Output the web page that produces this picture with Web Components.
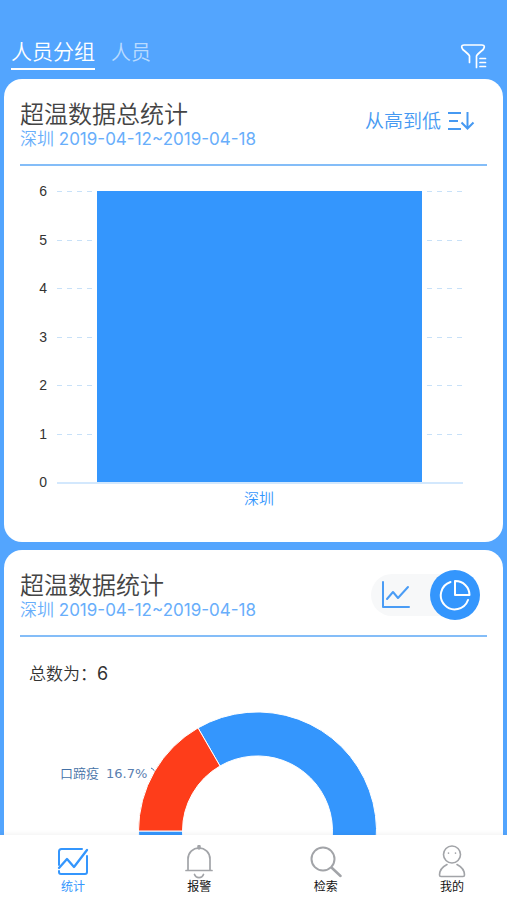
<!DOCTYPE html>
<html lang="zh-CN">
<head>
<meta charset="utf-8">
<meta name="viewport" content="width=device-width, initial-scale=1">
<title>超温数据统计</title>
<style>
  body { margin: 0; background: #53a5fe; font-family: Inter, "Noto Sans CJK SC", sans-serif; color: #444; }
</style>
</head>
<body>
<stats-app>
  <app-header slot="header"></app-header>
  <stat-card heading="超温数据总统计" place="深圳" period="2019-04-12~2019-04-18">
    <sort-button slot="action">从高到低</sort-button>
    <bar-chart label="深圳" value="6"></bar-chart>
  </stat-card>
  <stat-card heading="超温数据统计" place="深圳" period="2019-04-12~2019-04-18">
    <chart-switch slot="action"></chart-switch>
    <donut-chart total="6" label="口蹄疫" share="16.7%"></donut-chart>
  </stat-card>
  <tab-bar slot="footer">
    <tab-item current>
      <svg slot="icon" width="32" height="32" viewBox="0 0 32 32" fill="none" stroke="#3496fd" stroke-width="2" stroke-linecap="round" stroke-linejoin="round"><path d="M25 3H4.500Q2 3 2 5.500V19M2 25v1q0 2 2 2h24q2 0 2-2V10" /><path d="M2 22l8-9 7 8L30 4" stroke-width="2.300"/></svg>统计
    </tab-item>
    <tab-item>
      <svg slot="icon" width="32" height="34" viewBox="0 0 32 34" fill="none" stroke="#a2a4a8" stroke-width="1.700" stroke-linecap="round"><path d="M5 25V14a11 11 0 0 1 22 0v11M3 25.500h26M11.500 29.500a4.800 4.800 0 0 0 9 0"/><path d="M16 1.500v1.500" stroke-width="3.500"/></svg>报警
    </tab-item>
    <tab-item>
      <svg slot="icon" width="32" height="32" viewBox="0 0 32 32" fill="none" stroke="#a2a4a8" stroke-width="2" stroke-linecap="round"><circle cx="13" cy="13" r="11.500"/><path d="M22 22l8.500 8" stroke-width="2.500"/></svg>检索
    </tab-item>
    <tab-item>
      <svg slot="icon" width="32" height="34" viewBox="0 0 32 34" fill="none" stroke="#a2a4a8" stroke-width="1.600" stroke-linecap="round" stroke-linejoin="round"><circle cx="16" cy="9.500" r="8.500"/><path d="M12.500 8v.2M19.500 8v.2M11 19.500C6 22 3.500 26 3.500 30q0 1.500 1.500 1.500h22q1.500 0 1.500-1.500c0-4-2.500-8-7.500-10.500"/></svg>我的
    </tab-item>
  </tab-bar>
</stats-app>

<script>
const define = (name, render) => customElements.define(name, class extends HTMLElement {
  constructor() { super(); this.attachShadow({ mode: 'open' }); }
  connectedCallback() { this.shadowRoot.innerHTML = render(this); }
});

define('stats-app', () => `
  <style>
    :host { display: flex; flex-direction: column; height: 100vh; }
    main { flex: 1; min-height: 0; overflow: hidden; display: flex; flex-direction: column; gap: 8px; padding: 0 4px; }
    ::slotted(stat-card) { flex: none; }
  </style>
  <slot name="header"></slot>
  <main><slot></slot></main>
  <slot name="footer"></slot>`);

define('app-header', () => `
  <style>
    :host { display: flex; justify-content: space-between; align-items: flex-start; padding: 36px 20px 9px 11px; }
    nav { display: flex; gap: 16px; }
    button { border: 0; padding: 0; background: none; font: inherit; color: #fff; height: 34px; box-sizing: border-box; }
    .tab { font-size: 20px; font-weight: 350; line-height: 32px; color: #b9dbff; }
    .tab.on { font-size: 21px; color: #fff; border-bottom: 2px solid #fff; }
    svg { display: block; margin-top: 7px; }
  </style>
  <nav><button class="tab on">人员分组</button><button class="tab">人员</button></nav>
  <button aria-label="筛选">
    <svg width="27" height="27" viewBox="0 0 27 27" fill="none" stroke="#fff" stroke-width="1.700" stroke-linecap="round" stroke-linejoin="round"><path d="M9.500 19.500v-6.500Q9 11.500 2.800 6.500 0 2 4 2h18q4 0 1.200 4.500Q17 11.500 16.500 13v11.500M20 15.500h5.500M20 19.500h5.500M20 23.500h5.500"/></svg>
  </button>`);

define('stat-card', el => `
  <style>
    :host { display: block; background: #fff; border-radius: 18px; padding: 20px 16px; }
    header { display: flex; justify-content: space-between; align-items: center; height: 65px; border-bottom: 2px solid #84bdf8; }
    header > div { align-self: flex-start; }
    h2 { margin: 0; font-size: 24px; line-height: 32px; font-weight: 350; color: #444; white-space: nowrap; }
    p { margin: 0; font-size: 17px; line-height: 16px; color: #68aefb; font-weight: 350; white-space: nowrap; }
    span { font-weight: 400; }
  </style>
  <header><div><h2>${el.getAttribute('heading')}</h2><p>${el.getAttribute('place')} <span>${el.getAttribute('period')}</span></p></div><slot name="action"></slot></header>
  <slot></slot>`);

define('sort-button', () => `
  <style>
    :host { display: block; padding: 0 12px 20px 0; }
    button { display: flex; align-items: center; gap: 6px; border: 0; padding: 0; background: none; color: #4699f2; font: inherit; font-size: 19px; font-weight: 350; line-height: 24px; white-space: nowrap; }
  </style>
  <button><slot></slot><svg width="28" height="20" viewBox="0 0 28 20" fill="none" stroke="#4699f2" stroke-width="2"><path d="M1 1h13M2 9h9M1 17h13M20.500 0v16M14.500 10.500l6 6 6-6"/></svg></button>`);

define('bar-chart', el => {
  const max = Number(el.getAttribute('value')), step = 291 / max;
  const y = v => Math.round(311 - v * step) - 0.5;
  let rows = '';
  for (let v = 0; v <= max; v++) {
    rows += `<text x="27" y="${Math.round(y(v) + 5.5)}" text-anchor="end">${v}</text>`;
    if (v) rows += `<path class="grid" d="M37 ${y(v) + 1}H443"/>`;
  }
  return `
  <style>
    :host { display: block; padding-top: 5px; }
    svg { display: block; width: 100%; height: auto; }
    text { font: 14px "Liberation Sans", sans-serif; fill: #333; }
    .grid { stroke: #c8e1f8; stroke-dasharray: 5 5; }
    .name { font: 350 15px "Noto Sans CJK SC", sans-serif; fill: #3496fd; }
  </style>
  <svg viewBox="0 0 467 351" role="img">
    ${rows}
    <path d="M37 312H443" stroke="#d3e8fd" stroke-width="2"/>
    <rect x="77" y="20" width="325" height="291" fill="#3496fd"/>
    <text class="name" x="239" y="333" text-anchor="middle">${el.getAttribute('label')}</text>
  </svg>`;
});

define('chart-switch', () => `
  <style>
    :host { display: block; padding: 0 7px 16px 0; }
    div { display: flex; align-items: center; height: 42px; background: #f7f8f9; border-radius: 21px; }
    button { border: 0; padding: 0; background: none; display: grid; place-items: center; width: 50px; height: 50px; border-radius: 25px; }
    .on { background: #3496fd; margin-left: 9px; }
  </style>
  <div>
    <button aria-label="折线图"><svg width="30" height="28" viewBox="0 0 30 28" fill="none" stroke="#4a9cf5" stroke-width="2" stroke-linecap="round" stroke-linejoin="round"><path d="M2 1v25h26M6 18l6-7 5 6L27 6"/></svg></button>
    <button class="on" aria-label="饼图"><svg width="32" height="32" viewBox="0 0 32 32" fill="none" stroke="#fff" stroke-width="2" stroke-linecap="round" stroke-linejoin="round"><path d="M11.500 3A14 14 0 1 0 29 21M16 2v14h14.500A14 14 0 0 0 16 2z"/></svg></button>
  </div>`);

define('donut-chart', el => `
  <style>
    :host { display: block; }
    p { margin: 0; padding: 25px 9px 0; font-size: 17px; line-height: 24px; font-weight: 350; color: #333; }
    p span { font-size: 18px; font-weight: 400; }
    svg { display: block; width: 100%; height: auto; }
    text { font: 350 13px "Noto Sans CJK SC", sans-serif; fill: #4572a7; }
    .share { font: 13px "DejaVu Sans", sans-serif; fill: #5a80b0; }
  </style>
  <p>总数为：<span>${el.getAttribute('total')}</span></p>
  <svg viewBox="0 0 467 290" role="img">
    <text x="40" y="92">${el.getAttribute('label')}</text>
    <text class="share" x="86" y="92">${el.getAttribute('share')}</text>
    <path d="M131 82q3 1 4 4" fill="none" stroke="#4572a7"/>
    <g stroke="#fff" transform="translate(237.500 145)">
      <path fill="#3496fd" d="M-59.500-103.100A119 119 0 1 1-119 0H-75A75 75 0 1 0-37.500-65z"/>
      <path fill="#fe3d1a" d="M-119 0A119 119 0 0 1-59.500-103.100L-37.500-65A75 75 0 0 0-75 0z"/>
    </g>
  </svg>`);

define('tab-bar', () => `
  <style>
    :host { display: flex; justify-content: space-between; flex: none; height: 65px; box-sizing: border-box; padding: 0 17px 0 35px; background: #fff; box-shadow: 0 -1px 5px rgba(0,0,0,.06); position: relative; }
    ::slotted(tab-item) { width: 76px; }
  </style>
  <slot></slot>`);

define('tab-item', el => `
  <style>
    :host { display: block; }
    button { display: flex; flex-direction: column; align-items: center; width: 100%; border: 0; padding: 10px 0 0; background: none; font: inherit; font-size: 12px; line-height: 16px; color: ${el.hasAttribute('current') ? '#3496fd' : '#111'}; }
    .icon { display: flex; align-items: center; height: 34px; }
  </style>
  <button><span class="icon"><slot name="icon"></slot></span><span><slot></slot></span></button>`);
</script>
</body>
</html>
